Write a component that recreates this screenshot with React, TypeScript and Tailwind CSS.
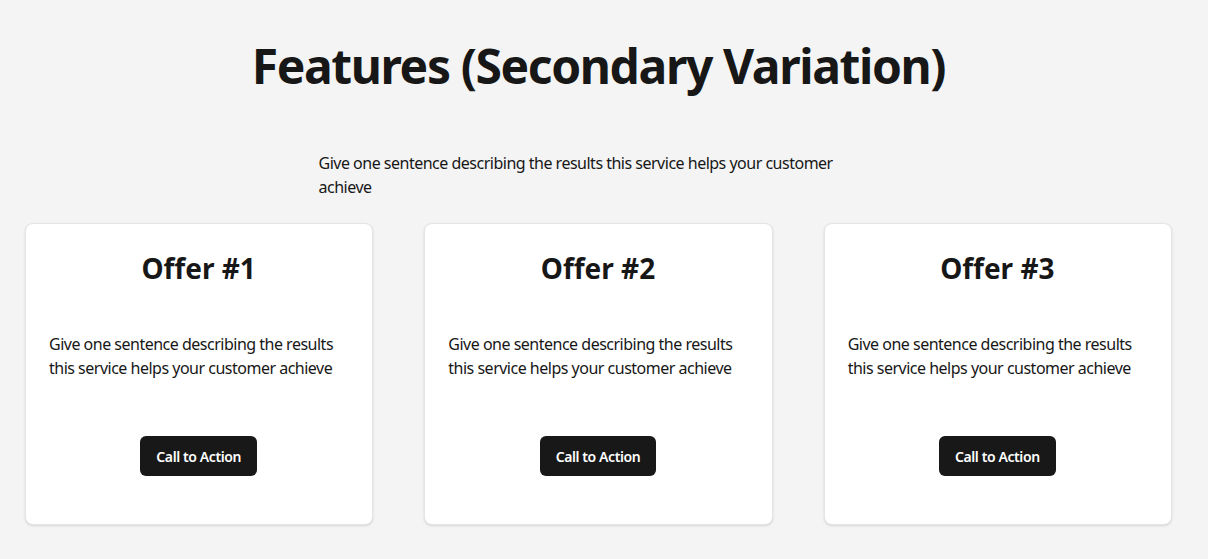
const offers = ["Offer #1", "Offer #2", "Offer #3"];

const blurb = "Give one sentence describing the results this service helps your customer achieve";

export default function App() {
  return (
    <div
      className="min-h-screen bg-[#f4f4f4] text-[#171717] pl-[25px] pr-[36px]"
      style={{ fontFamily: '"Noto Sans", "Open Sans", sans-serif' }}
    >
      <h1 className="pt-[34px] text-center text-[48px] font-bold leading-[64px] tracking-[-1.4px]">
        Features (Secondary Variation)
      </h1>

      <p className="mx-auto mt-[53px] max-w-[560px] text-[16px] leading-[24px] tracking-[-0.5px]">{blurb}</p>

      <div className="mt-[24px] grid grid-cols-3 gap-[51px]">
        {offers.map((title) => (
          <div
            key={title}
            className="flex flex-col items-center rounded-lg border border-[#e5e5e5] bg-white pl-[23px] pr-6 pt-6 pb-12 shadow-sm"
          >
            <h2 className="text-[28px] font-bold leading-[40px]">{title}</h2>
            <p className="mt-[44px] self-stretch text-[16px] leading-[24px] tracking-[-0.5px]">{blurb}</p>
            <button className="mt-[56px] h-10 rounded-md bg-[#181818] px-4 text-[14px] font-semibold tracking-[-0.4px] text-white">
              Call to Action
            </button>
          </div>
        ))}
      </div>
    </div>
  );
}
